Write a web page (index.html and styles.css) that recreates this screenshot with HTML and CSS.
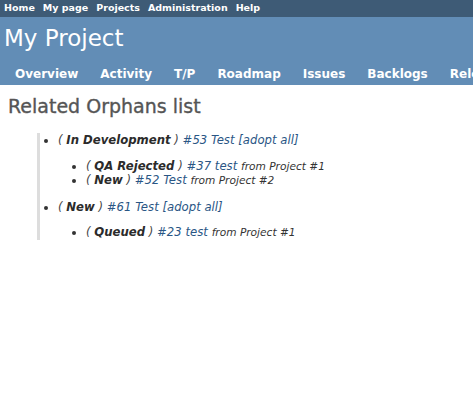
FILE: index.html
```html
<!DOCTYPE html>
<html>
<head>
<meta charset="utf-8">
<link rel="stylesheet" href="styles.css">
</head>
<body>
<div class="top-menu">
  <a href="#">Home</a>
  <a href="#">My page</a>
  <a href="#">Projects</a>
  <a href="#">Administration</a>
  <a href="#">Help</a>
</div>
<div class="header">
  <h1 class="title">My Project</h1>
  <ul class="main-menu">
    <li><a href="#">Overview</a></li>
    <li><a href="#">Activity</a></li>
    <li><a href="#">T/P</a></li>
    <li><a href="#">Roadmap</a></li>
    <li><a href="#">Issues</a></li>
    <li><a href="#">Backlogs</a></li>
    <li><a href="#">Releases</a></li>
  </ul>
</div>
<div class="content">
  <h2 class="page-title">Related Orphans list</h2>
  <ul class="orphans">
    <li><span class="paren">(</span> <b class="status">In Development</b> <span class="paren">)</span> <a href="#">#53 Test</a> <a href="#">[adopt all]</a>
      <ul class="children">
        <li><span class="paren">(</span> <b class="status">QA Rejected</b> <span class="paren">)</span> <a href="#">#37 test</a> <span class="from">from Project #1</span></li>
        <li><span class="paren">(</span> <b class="status">New</b> <span class="paren">)</span> <a href="#">#52 Test</a> <span class="from">from Project #2</span></li>
      </ul>
    </li>
    <li><span class="paren">(</span> <b class="status">New</b> <span class="paren">)</span> <a href="#">#61 Test</a> <a href="#">[adopt all]</a>
      <ul class="children">
        <li><span class="paren">(</span> <b class="status">Queued</b> <span class="paren">)</span> <a href="#">#23 test</a> <span class="from">from Project #1</span></li>
      </ul>
    </li>
  </ul>
</div>
</body>
</html>
```
FILE: styles.css
```css
html, body {
  margin: 0;
  padding: 0;
  background: #fff;
  font-family: "DejaVu Sans", Verdana, sans-serif;
  color: #333;
  overflow: hidden;
}
a { text-decoration: none; }

.top-menu {
  background: #3e5b76;
  height: 17px;
  line-height: 15px;
  padding-left: 4px;
  display: flex;
  gap: 8px;
  font-size: 9.5px;
  font-weight: bold;
  white-space: nowrap;
}
.top-menu a { color: #fff; }

.header {
  background: #628db6;
  padding-top: 8px;
  height: 60px;
  overflow: hidden;
}
.title {
  margin: 0 0 0 4px;
  font-size: 23px;
  font-weight: normal;
  line-height: 27px;
  color: #fff;
}
.main-menu {
  list-style: none;
  margin: 11px 0 0 5px;
  padding: 0;
  display: flex;
  white-space: nowrap;
}
.main-menu li { margin-right: 2px; flex: none; }
.main-menu a {
  display: block;
  padding: 4px 10px;
  font-size: 12px;
  font-weight: bold;
  line-height: 14px;
  color: #fff;
}

.content { padding: 10px 8px; }
.page-title {
  margin: 0;
  font-size: 19px;
  font-weight: normal;
  line-height: 22px;
  color: #555;
  -webkit-text-stroke: 0.35px #555;
}
.orphans {
  margin: 16px 0 0 29px;
  padding: 0 0 0 18px;
  border-left: 3px solid #ddd;
  list-style: disc;
  font-size: 11.7px;
  line-height: 14.5px;
  font-style: italic;
}
.orphans li { color: #333; }
.children {
  margin: 11px 0 12px;
  padding-left: 28px;
  list-style: disc;
}
.orphans a { color: #2a5685; }
.paren { color: #444; }
.status { color: #2b2b2b; font-weight: bold; }
.from { font-size: 10.6px; color: #333; }
```
